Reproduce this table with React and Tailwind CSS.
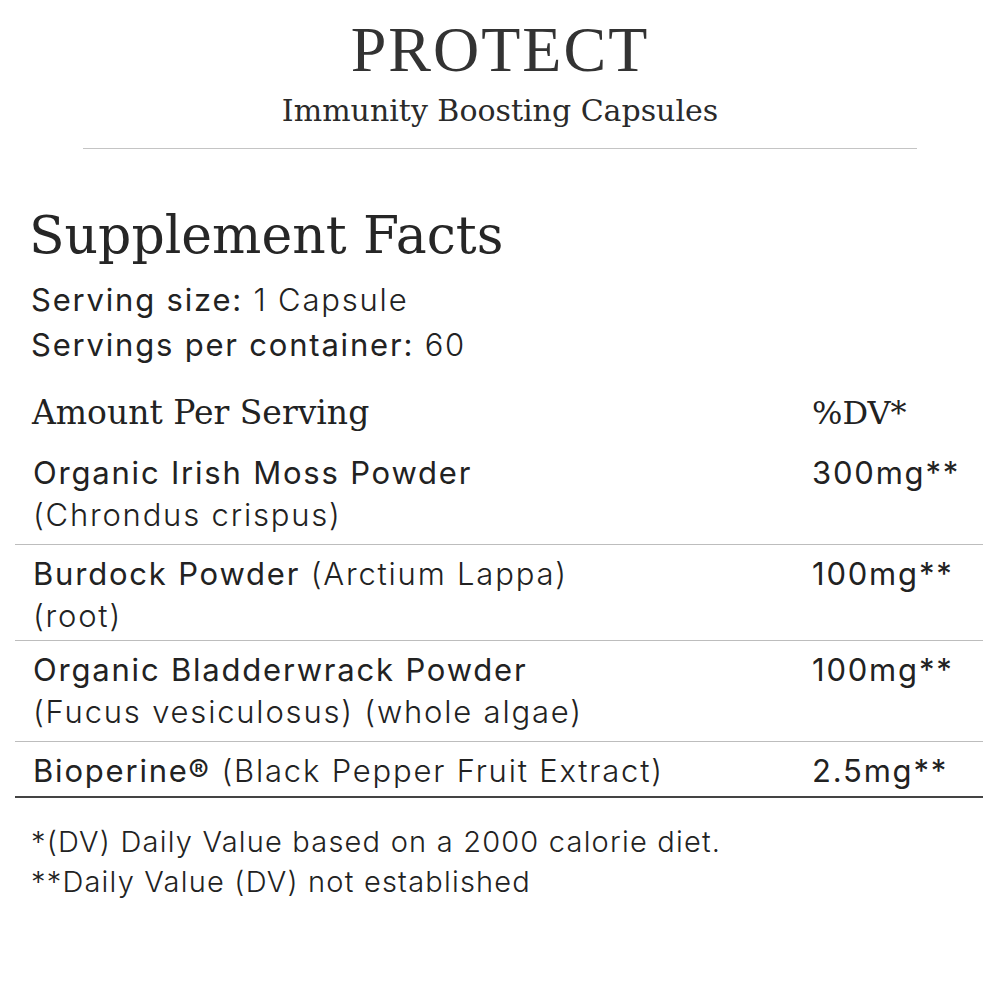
const serif = { fontFamily: '"DejaVu Serif", "Liberation Serif", serif' }

const rows = [
  { name: 'Organic Irish Moss Powder', sub: '(Chrondus crispus)', amount: '300mg**', h: 'h-[100px]', border: false },
  { name: 'Burdock Powder', extra: ' (Arctium Lappa)', sub: '(root)', amount: '100mg**', h: 'h-[96px]', border: true },
  { name: 'Organic Bladderwrack Powder', sub: '(Fucus vesiculosus) (whole algae)', amount: '100mg**', h: 'h-[101px]', border: true },
  { name: 'Bioperine®', extra: ' (Black Pepper Fruit Extract)', amount: '2.5mg**', h: 'h-[55px]', border: true },
]

export default function App() {
  return (
    <div className="w-[1000px] h-[1000px] bg-white text-[#222] font-['Inter',sans-serif] overflow-hidden">
      <div className="flex flex-col items-center pt-[18px]">
        <h1 className="text-[64px] leading-none font-['Liberation_Serif',serif] tracking-[2px] text-[#333]">PROTECT</h1>
        <p className="text-[30px] leading-none mt-[14px] text-[#2a2a2a]" style={serif}>Immunity Boosting Capsules</p>
      </div>
      <div className="mx-[83px] mt-[22px] border-t border-[#c4c4c4]" />

      <div className="px-[15px] pr-[17px]">
        <h2 className="pl-[14px] mt-[60px] text-[52px] leading-none text-[#262626]" style={serif}>Supplement Facts</h2>
        <div className="pl-[16px] mt-[16px] text-[31px] tracking-[1.8px] leading-[45px]">
          <p><span className="font-normal">Serving size:</span> <span className="font-light">1 Capsule</span></p>
          <p><span className="font-normal">Servings per container:</span> <span className="font-light">60</span></p>
        </div>

        <div className="flex justify-between pl-[17px] mt-[15px] h-[62px] items-center text-[33px]" style={serif}>
          <span>Amount Per Serving</span>
          <span className="w-[171px] text-[32px]">%DV*</span>
        </div>

        {rows.map(r => (
          <div key={r.name} className={`${r.h} flex justify-between pl-[18px] pt-[8px] text-[31px] tracking-[1.8px] leading-[42px] ${r.border ? 'border-t border-[#bdbdbd]' : ''}`}>
            <div>
              <p>
                <span className="font-normal">{r.name}</span>
                {r.extra && <span className="font-light">{r.extra}</span>}
              </p>
              {r.sub && <p className="font-light">{r.sub}</p>}
            </div>
            <span className="w-[171px] font-normal">{r.amount}</span>
          </div>
        ))}
        <div className="border-t-2 border-[#444]" />

        <div className="pl-[16px] mt-[24px] text-[29px] tracking-[1.2px] leading-[40px] font-light">
          <p>*(DV) Daily Value based on a 2000 calorie diet.</p>
          <p>**Daily Value (DV) not established</p>
        </div>
      </div>
    </div>
  )
}
